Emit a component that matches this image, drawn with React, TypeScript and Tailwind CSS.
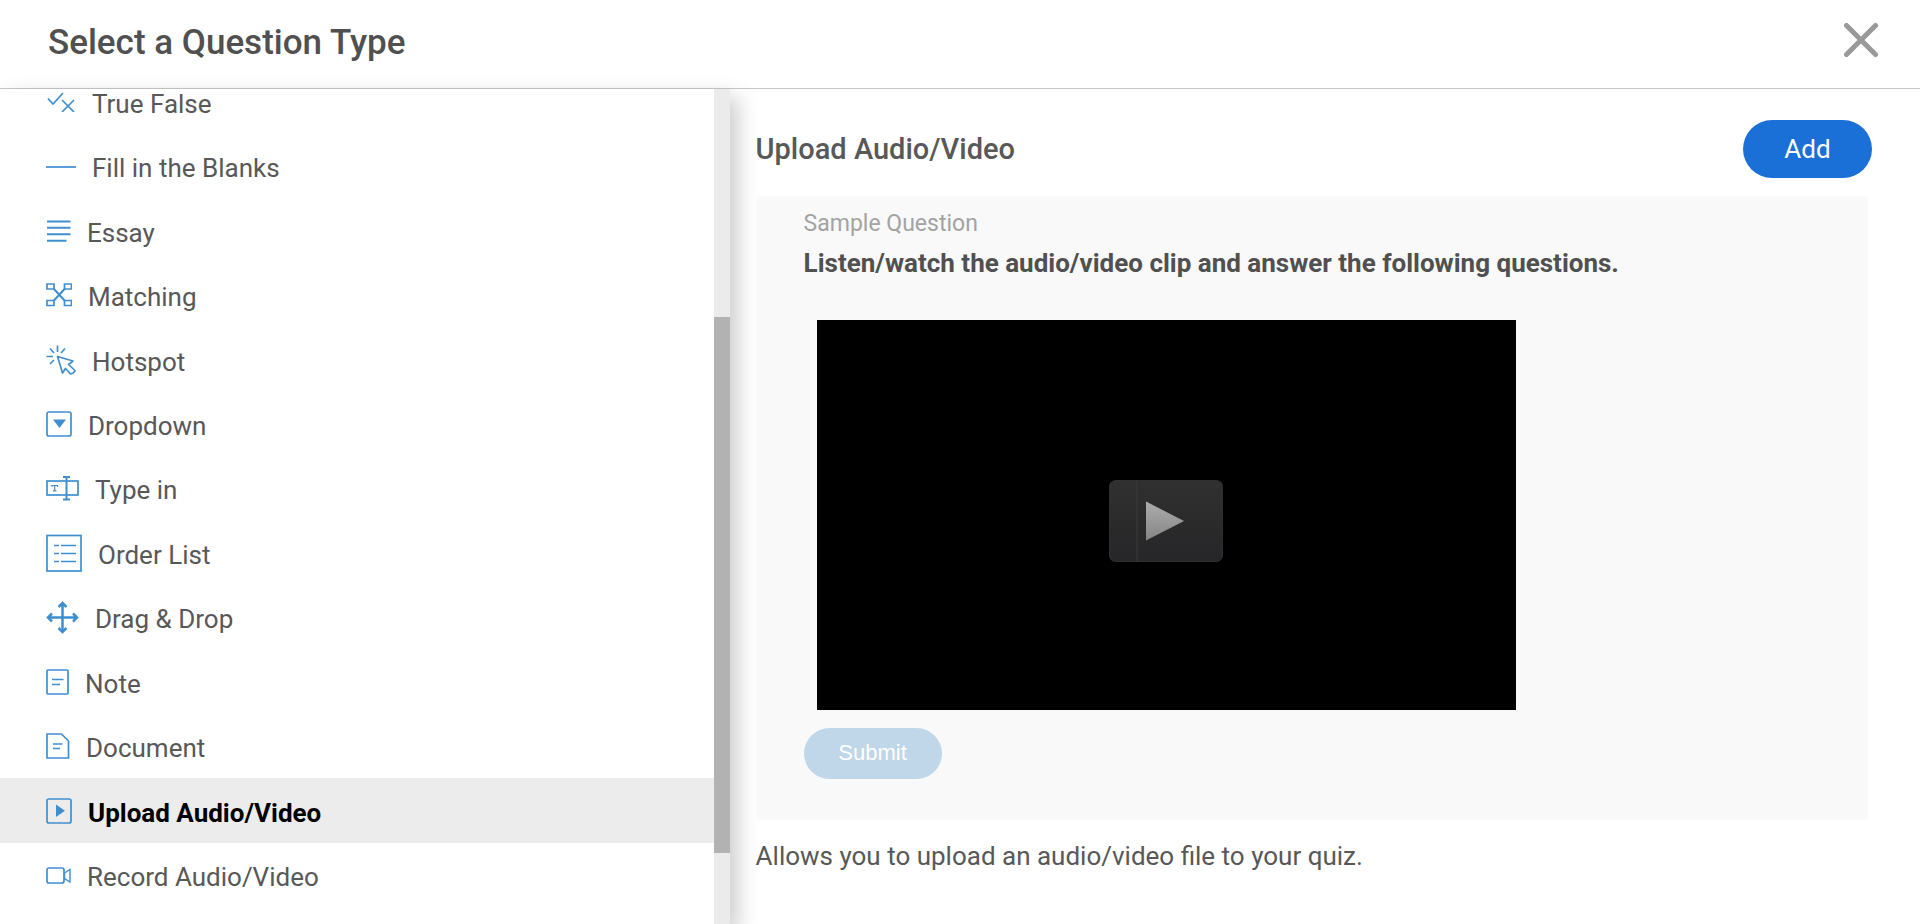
import React, { useState } from 'react'
import clsx from 'clsx'

type IconProps = {
  width: number
  height: number
  children: React.ReactNode
}

function Icon({ width, height, children }: IconProps) {
  return (
    <svg
      width={width}
      height={height}
      viewBox={`0 0 ${width} ${height}`}
      fill="none"
      stroke="#3f8fd0"
      strokeWidth="1.7"
      className="shrink-0"
      aria-hidden="true"
    >
      {children}
    </svg>
  )
}

const questionTypes = [
  {
    label: 'True False',
    icon: (
      <Icon width={30} height={20}>
        <path d="M2 6.5L7 12L17 1M16 8L28 20M28 8L16 20" />
      </Icon>
    ),
  },
  {
    label: 'Fill in the Blanks',
    icon: (
      <Icon width={30} height={4}>
        <path d="M0 3H30" />
      </Icon>
    ),
  },
  {
    label: 'Essay',
    icon: (
      <Icon width={25} height={22}>
        <path d="M1 1.5H24.5M1 7.8H24.5M1 14.3H24.5M1 20.8H20.5" strokeWidth="2" />
      </Icon>
    ),
  },
  {
    label: 'Matching',
    icon: (
      <Icon width={26} height={24}>
        <path d="M1 1H8V6H1zM18.500 1H25.500V6H18.500zM1 17.500H8V22.500H1zM18.500 17.500H25.500V22.500H18.500z" />
        <path d="M7.500 5.500L19 18M19 5.500L7.500 18" strokeWidth="2" />
      </Icon>
    ),
  },
  {
    label: 'Hotspot',
    icon: (
      <Icon width={30} height={30}>
        <path d="M11.500 0.500V7M4 3.500L8 8M19 3.500L15 8M0.500 11.500H7M4 19L8 15" />
        <path d="M11.500 11.500L27 16L22.500 19.500L29 25.500Q28 28.500 24.500 29L19.500 23.500L16.500 28z" strokeLinejoin="round" />
      </Icon>
    ),
  },
  {
    label: 'Dropdown',
    icon: (
      <Icon width={26} height={26}>
        <rect x="1" y="1" width="24" height="24" rx="2" />
        <path d="M7 8.500H20L13.500 17z" fill="#3f8fd0" stroke="none" />
      </Icon>
    ),
  },
  {
    label: 'Type in',
    icon: (
      <Icon width={33} height={26}>
        <rect x="1" y="6" width="31" height="14" />
        <path d="M20.500 2V24M17 2H24M17 24.500H24" strokeWidth="2" />
        <path d="M6 12V10.500H11.500V12M8.700 10.500V15.500M7 15.800H10.500" strokeWidth="1.200" />
      </Icon>
    ),
  },
  {
    label: 'Order List',
    icon: (
      <Icon width={36} height={38}>
        <rect x="1" y="1.500" width="34" height="35.500" />
        <path d="M8 11.500H13M15 11.500H30M8 19.500H13M15 19.500H30M8 27.500H13M15 27.500H30" />
      </Icon>
    ),
  },
  {
    label: 'Drag & Drop',
    icon: (
      <Icon width={33} height={33}>
        <path
          d="M16.500 2V31M2 16.500H31M12.500 6L16.500 2L20.500 6M12.500 27L16.500 31L20.500 27M6 12.500L2 16.500L6 20.500M27 12.500L31 16.500L27 20.500"
          strokeWidth="2.500"
        />
      </Icon>
    ),
  },
  {
    label: 'Note',
    icon: (
      <Icon width={23} height={26}>
        <rect x="1" y="1" width="21" height="24" rx="1" />
        <path d="M6 10.500H17.500M6 15.500H14" />
      </Icon>
    ),
  },
  {
    label: 'Document',
    icon: (
      <Icon width={24} height={26}>
        <path d="M1 1H15.500L22.500 8V25H1z" />
        <path d="M7 11H16.500M7 15.500H14" />
      </Icon>
    ),
  },
  {
    label: 'Upload Audio/Video',
    icon: (
      <Icon width={26} height={26}>
        <rect x="1" y="1" width="24" height="24" rx="2" />
        <path d="M10 6.500V19L19 12.800z" fill="#3f8fd0" stroke="none" />
      </Icon>
    ),
  },
  {
    label: 'Record Audio/Video',
    icon: (
      <Icon width={25} height={17}>
        <rect x="1" y="1" width="17" height="15" rx="2" />
        <path d="M18.500 6L24 2.500V15L18.500 11.500z" strokeWidth="1.400" />
      </Icon>
    ),
  },
]

export default function App() {
  const [selected, setSelected] = useState('Upload Audio/Video')

  return (
    <div className="flex h-screen flex-col bg-white font-['Roboto',sans-serif] text-[26px] text-[#585858]">
      {/* Header */}
      <header className="flex h-[89px] shrink-0 items-center justify-between border-b border-[#c8c8c8] pr-[41px] pb-1 pl-12">
        <h1 className="pt-0.5 text-[35px] leading-10 font-medium text-[#505050]">Select a Question Type</h1>
        <button type="button" aria-label="Close" className="pb-1">
          <svg width="36" height="36" viewBox="0 0 36 36" stroke="#999" strokeWidth="5" strokeLinecap="round">
            <path d="M3.500 3.500L32.500 32.500M32.500 3.500L3.500 32.500" />
          </svg>
        </button>
      </header>

      <div className="flex min-h-0 flex-1">
        {/* Question types */}
        <aside className="flex w-[38%] shrink-0 shadow-[8px_8px_20px_rgba(0,0,0,0.2)]">
          <nav className="flex-1 overflow-hidden bg-white">
            <ul className="-mt-5 grid h-[838px] auto-rows-fr">
              {questionTypes.map((type) => (
                <li key={type.label}>
                  <button
                    type="button"
                    onClick={() => setSelected(type.label)}
                    className={clsx(
                      'flex h-full w-full items-center gap-4 pt-px pl-[46px] text-left',
                      type.label === selected && 'bg-[#ececec] font-bold text-black'
                    )}
                  >
                    {type.icon}
                    <span className="pt-1 leading-8">{type.label}</span>
                  </button>
                </li>
              ))}
            </ul>
          </nav>
          {/* Scroll track */}
          <div className="flex w-4 flex-col bg-[#ebebeb]" aria-hidden="true">
            <div className="grow-[228]" />
            <div className="grow-[536] bg-[#b2b2b2]" />
            <div className="grow-[71]" />
          </div>
        </aside>

        {/* Preview */}
        <main className="min-w-0 flex-1 pt-[31px] pr-12 pl-[26px]">
          <div className="flex items-center justify-between">
            <h2 className="text-[29px] leading-10 font-medium">{selected}</h2>
            <button type="button" className="h-[58px] w-[129px] rounded-full bg-[#1a70d6] text-white">
              Add
            </button>
          </div>

          <section className="mt-[18px] mr-1 rounded bg-[#f9f9f9] px-12 pt-3 pb-[41px]">
            <p className="text-[23px] leading-8 text-[#a3a3a3]">Sample Question</p>
            <p className="mt-[7px] leading-8 font-bold text-[#505050]">
              Listen/watch the audio/video clip and answer the following questions.
            </p>
            <div className="mt-[41px] ml-[13px] flex aspect-[699/390] max-w-[699px] items-center justify-center bg-black pt-3">
              <button type="button" aria-label="Play">
                <svg width="114" height="82" viewBox="0 0 114 82">
                  <defs>
                    <linearGradient id="plate" x1="0" y1="0" x2="0" y2="1">
                      <stop offset="0" stopColor="#303030" />
                      <stop offset="1" stopColor="#262628" />
                    </linearGradient>
                    <linearGradient id="arrow" x1="0" y1="0" x2="0" y2="1">
                      <stop offset="0" stopColor="#adadad" />
                      <stop offset="1" stopColor="#858585" />
                    </linearGradient>
                  </defs>
                  <rect x="0.500" y="0.500" width="113" height="81" rx="6" fill="url(#plate)" stroke="#303030" />
                  <path d="M28 1V81" stroke="#3a3a3a" />
                  <path d="M37 21.500L75 41L37 60.500z" fill="url(#arrow)" />
                </svg>
              </button>
            </div>
            <button
              type="button"
              disabled
              className="mt-[18px] block h-[51px] w-[138px] rounded-full bg-[#c0d6e9] pb-0.5 font-['Liberation_Sans',sans-serif] text-[22px] text-white"
            >
              Submit
            </button>
          </section>

          <p className="mt-5 leading-8">Allows you to upload an audio/video file to your quiz.</p>
        </main>
      </div>
    </div>
  )
}
